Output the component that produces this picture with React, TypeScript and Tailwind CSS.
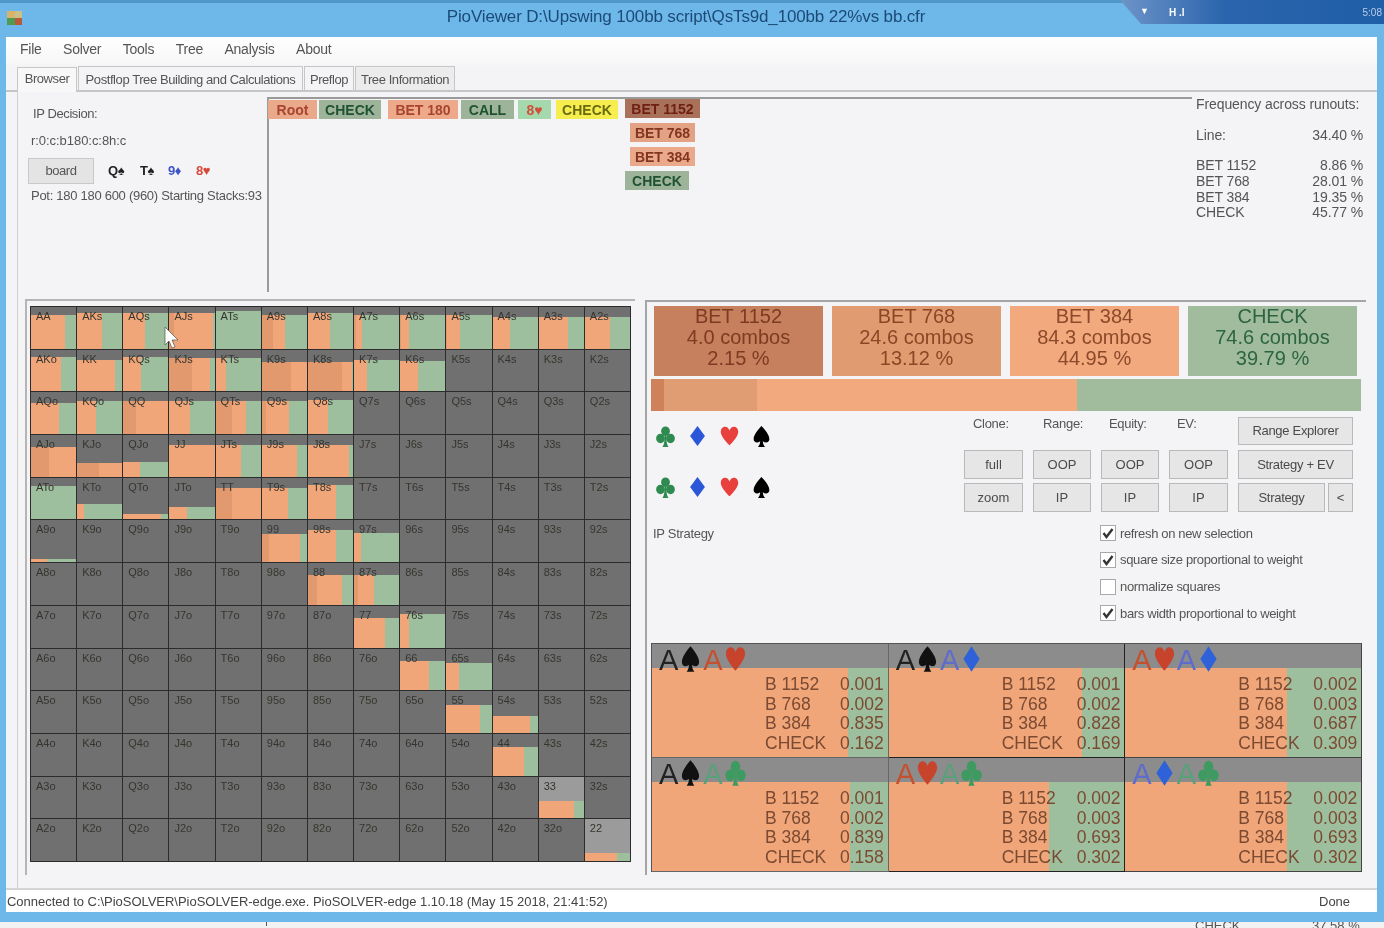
import React from "react";

const FONT = { fontFamily: '"Liberation Sans", Arial, sans-serif' };
const R = "AKQJT98765432".split("");
const ORANGE = "#f1a679";
const DARK = "#e2996e";
const GREEN = "#9dbf9e";

// hand: [coloured height, orange end, dark orange end]
const M: Record<string, [number, number, number?]> = {
  AA: [0.8, 0.75], AKs: [0.85, 0.55], AQs: [0.85, 0.5], AJs: [0.85, 0.96, 0.1], ATs: [0.9, 0], A9s: [0.82, 0.52, 0.25], A8s: [0.85, 0.48],
  A7s: [0.8, 0.17, 0.04], A6s: [0.8, 0.2, 0.03], A5s: [0.8, 0.3, 0.02], A4s: [0.75, 0.37], A3s: [0.75, 0.65], A2s: [0.75, 0.55],
  AKo: [0.82, 0.67], KK: [0.75, 0.85], KQs: [0.82, 0.4], KJs: [0.8, 0.9, 0.5], KTs: [0.8, 0.22], K9s: [0.7, 1, 0.65], K8s: [0.7, 0.98, 0.75],
  K7s: [0.75, 0.3], K6s: [0.72, 0.4],
  AQo: [0.75, 0.62], KQo: [0.8, 0.42], QQ: [0.8, 1, 0.3], QJs: [0.8, 0.45], QTs: [0.8, 0.67, 0.35], Q9s: [0.8, 0.6, 0.1], Q8s: [0.82, 0.45],
  AJo: [0.72, 1, 0.4], KJo: [0.34, 1, 0.5], QJo: [0.36, 0.38], JJ: [0.76, 1], JTs: [0.76, 0.55], J9s: [0.76, 0.78], J8s: [0.76, 0.92],
  ATo: [0.8, 0], KTo: [0.38, 0.15], QTo: [0.12, 0.85], JTo: [0.3, 0.4], TT: [0.75, 1, 0.35], T9s: [0.76, 0.58], T8s: [0.82, 0.62],
  A9o: [0.08, 0.35], "99": [0.68, 0.85, 0.15], "98s": [0.78, 0.62], "97s": [0.7, 0.15],
  "88": [0.72, 0.75, 0.2], "87s": [0.72, 0.45, 0.1],
  "77": [0.72, 0.68], "76s": [0.8, 0.2],
  "66": [0.7, 0.65], "65s": [0.65, 0.28],
  "55": [0.66, 0.75], "54s": [0.4, 0.82],
  "44": [0.68, 0.7],
  "33": [0.42, 0.78], "22": [0.2, 0.72],
};
const LIGHT = new Set(["33", "22"]);

function Cell({ r, c }: { r: number; c: number }) {
  const label = r === c ? R[r] + R[c] : c > r ? R[r] + R[c] + "s" : R[c] + R[r] + "o";
  const d = M[label];
  const top = LIGHT.has(label) ? "#9b9b9b" : "#707070";
  let bg = "";
  if (d) {
    const o = d[1] * 100;
    const k = (d[2] ?? 0) * 100;
    bg = `linear-gradient(to right, ${DARK} 0 ${k}%, ${ORANGE} ${k}% ${o}%, ${GREEN} ${o}% 100%)`;
  }
  return (
    <div className="relative border-r border-b border-[#2c2c2c] overflow-hidden" style={{ backgroundColor: top }}>
      {d && <div className="absolute inset-x-0 bottom-0" style={{ height: `${d[0] * 100}%`, background: bg }} />}
      <span className="absolute left-[5px] top-[2px] text-[11px] leading-[14px] text-[#35352f]">{label}</span>
    </div>
  );
}

function Chip({ t, bg, fg, w }: { t: string; bg: string; fg: string; w: string }) {
  return (
    <div className={`${w} h-[19px] flex items-center justify-center text-[14px] leading-none font-bold`} style={{ backgroundColor: bg, color: fg }}>
      {t}
    </div>
  );
}

function Btn({ t, className = "" }: { t: string; className?: string }) {
  return (
    <div className={`h-[29px] flex items-center justify-center bg-[#e6e6e6] border border-[#b9b9b9] text-[13px] text-[#4b4b4b] ${className}`}>{t}</div>
  );
}

function Stat({ t, sub, pct, bg, fg }: { t: string; sub: string; pct: string; bg: string; fg: string }) {
  return (
    <div className="w-[169px] h-[70px] flex flex-col items-center text-[20px] leading-[21px]" style={{ backgroundColor: bg, color: fg }}>
      <div>{t}</div>
      <div>{sub}</div>
      <div>{pct}</div>
    </div>
  );
}

function Check({ on, t }: { on: boolean; t: string }) {
  return (
    <div className="h-[26.7px] flex items-center gap-[4px]">
      <div className="w-[16px] h-[16px] border border-[#a8a8a8] bg-white flex items-center justify-center">
        {on && (
          <svg width="12" height="12" viewBox="0 0 12 12">
            <path d="M1.5 6 L4.5 10 L10.5 2" fill="none" stroke="#333" strokeWidth="2.4" />
          </svg>
        )}
      </div>
      <span className="text-[13px] text-[#555]">{t}</span>
    </div>
  );
}

const SUIT: Record<string, React.ReactNode> = {
  "♠": <path d="M12 1C12 1 3 9 3 14.5C3 18 7 19.5 10.5 17C10.3 19.5 9.5 21.5 8 23L16 23C14.5 21.5 13.7 19.5 13.5 17C17 19.5 21 18 21 14.5C21 9 12 1 12 1Z" />,
  "♥": <path d="M12 22C12 22 2 13 2 7.5C2 4 4.5 2 7 2C9.5 2 11 3.5 12 6C13 3.5 14.5 2 17 2C19.5 2 22 4 22 7.5C22 13 12 22 12 22Z" />,
  "♦": <path d="M12 1L20.5 12L12 23L3.5 12Z" />,
  "♣": (
    <>
      <circle cx="12" cy="6.5" r="5" />
      <circle cx="6.3" cy="14" r="5" />
      <circle cx="17.7" cy="14" r="5" />
      <path d="M11 10C11 17 10.5 20.5 8.5 23L15.5 23C13.5 20.5 13 17 13 10Z" />
    </>
  ),
};

function Suit({ s, color, w, h }: { s: string; color: string; w: number; h: number }) {
  return (
    <svg width={w} height={h} viewBox="0 0 24 24" preserveAspectRatio="none" fill={color} className="shrink-0">
      {SUIT[s]}
    </svg>
  );
}

const SC: Record<string, string> = { "♠": "#111111", "♥": "#c8432c", "♦": "#2f62d8", "♣": "#3f9a62" };
const AC: Record<string, string> = { "♠": "#222222", "♥": "#c5502f", "♦": "#5f6ccc", "♣": "#5aa07a" };

function Combo({ a, b, o, vals, dark }: { a: string; b: string; o: number; vals: string[]; dark: string }) {
  const names = ["B 1152", "B 768", "B 384", "CHECK"];
  return (
    <div className={`h-[114px] flex flex-col border-r border-b ${dark}`}>
      <div className="h-[24px] bg-[#8c8c8c] pl-[7px] flex items-center overflow-visible">
        {[a, b].map((s, i) => (
          <span key={i} className="flex items-center text-[29px] leading-none mt-[9px] relative z-10 mr-[1px]">
            <span style={{ color: AC[s] }}>A</span>
            <span className="ml-[1px] -mt-[3px]">
              <Suit s={s} color={SC[s]} w={23} h={28} />
            </span>
          </span>
        ))}
      </div>
      <div
        className="flex-1 pl-[113px] pt-[7px] text-[17.5px] leading-[19.7px] text-[#7b4a33]"
        style={{ background: `linear-gradient(to right, ${ORANGE} 0 ${o}%, ${GREEN} ${o}% 100%)` }}
      >
        {names.map((n, i) => (
          <div key={n} className="grid grid-cols-[75px_1fr]">
            <span>{n}</span>
            <span>{vals[i]}</span>
          </div>
        ))}
      </div>
    </div>
  );
}

export default function App() {
  return (
    <div style={FONT} className="relative w-[1384px] h-[928px] overflow-hidden bg-[#6db8e8] flex flex-col blur-[0.6px]">
      {/* title bar */}
      <div className="h-[37px] shrink-0 border-t-[3px] border-[#4f97c9] flex items-center justify-center relative">
        <div className="absolute left-[7px] top-[8px] w-[15px] h-[14px] grid grid-cols-2 grid-rows-2">
          <div className="bg-[#d7b36b]" />
          <div className="bg-[#c9c08a]" />
          <div className="bg-[#4f9b4f]" />
          <div className="bg-[#b8593a]" />
        </div>
        <span className="text-[17px] text-[#1c4a78] -ml-[12px] tracking-[-0.15px] -mt-[6px]">PioViewer D:\Upswing 100bb script\QsTs9d_100bb 22%vs bb.cfr</span>
        <div className="absolute right-0 -top-[3px] w-[264px] h-[24px] bg-[linear-gradient(to_right,#6d94c8,#2a64ac_40%,#1f5ea8)] [clip-path:polygon(0_0,100%_0,100%_100%,8%_100%)] flex items-start text-white text-[10px] pt-[5px]">
          <span className="ml-[20px] text-[9px]">▼</span>
          <span className="ml-[20px] font-bold">H .l</span>
          <span className="ml-auto mr-[2px] text-[#b9cde4]">5:08</span>
        </div>
      </div>

      {/* window */}
      <div className="ml-[6px] w-[1371px] h-[875px] shrink-0 bg-[#f4f4f6] flex flex-col">
        {/* menu */}
        <div className="h-[28px] shrink-0 bg-gradient-to-b from-white to-[#f6f6f6] pl-[14px] flex items-center gap-[21.5px] text-[14px] text-[#555] tracking-[-0.25px] pb-[3px]">
          <span>File</span>
          <span>Solver</span>
          <span>Tools</span>
          <span>Tree</span>
          <span>Analysis</span>
          <span>About</span>
        </div>
        {/* tabs */}
        <div className="h-[27px] shrink-0 pl-[11px] flex items-end border-b-2 border-[#c6c6c6] text-[13px] tracking-[-0.42px] text-[#555]">
          <div className="w-[60px] h-[25px] -mb-[2px] bg-[#f8f8f8] border border-b-0 border-[#c6c6c6] flex items-center justify-center pb-[2px] relative z-10">Browser</div>
          <div className="w-[225px] h-[24px] border border-b-0 border-[#c6c6c6] ml-[1px] flex items-center justify-center pt-[2px]">Postflop Tree Building and Calculations</div>
          <div className="w-[50px] h-[24px] border border-b-0 border-[#c6c6c6] ml-[1px] flex items-center justify-center pt-[2px]">Preflop</div>
          <div className="w-[100px] h-[24px] border border-b-0 border-[#c6c6c6] ml-[1px] bg-[#ececec] flex items-center justify-center pt-[2px]">Tree Information</div>
        </div>

        {/* content */}
        <div className="h-[796px] shrink-0 ml-[11px] border-l border-[#cfcfcf] flex flex-col">
          {/* upper */}
          <div className="h-[203px] shrink-0 flex">
            <div className="w-[249px] shrink-0 pl-[13px] text-[13px] text-[#555] tracking-[-0.4px]">
              <div className="pl-[2px] pt-[14px] leading-[16px]">IP Decision:</div>
              <div className="pt-[11px] leading-[16px] tracking-[-0.05px]">r:0:c:b180:c:8h:c</div>
              <div className="flex items-center mt-[9px]">
                <div className="-ml-[3px] w-[66px] h-[26px] bg-[#e4e4e4] border border-[#c8c8c8] flex items-center justify-center">board</div>
                <div className="flex text-[13px] font-bold ml-[14px]">
                  <span className="w-[32px] text-[#222]">Q♠</span>
                  <span className="w-[28px] text-[#222]">T♠</span>
                  <span className="w-[28px] text-[#3b55c8]">9♦</span>
                  <span className="text-[#d8483c]">8♥</span>
                </div>
              </div>
              <div className="pt-[3px] leading-[16px] whitespace-nowrap tracking-[-0.28px] mt-[1px]">Pot: 180 180 600 (960) Starting Stacks:93</div>
            </div>
            <div className="w-[925px] shrink-0 mt-[5px] h-[195px] border-l-2 border-t-2 border-[#9a9a9a] pt-[1px] flex items-start">
              <div className="flex gap-[3px] -ml-[1px]">
                <Chip t="Root" bg="#eba98c" fg="#a8452f" w="w-[49px]" />
                <Chip t="CHECK" bg="#9db49b" fg="#1f5232" w="w-[62px] -ml-[1px]" />
                <Chip t="BET 180" bg="#eda98a" fg="#a8452f" w="w-[70px] ml-[4px]" />
                <Chip t="CALL" bg="#9db49b" fg="#1f5232" w="w-[53px]" />
                <Chip t="8♥" bg="#a6d8ae" fg="#d0503c" w="w-[33px] ml-[1px]" />
                <Chip t="CHECK" bg="#f5ee4e" fg="#6c6a10" w="w-[62px] ml-[2px]" />
                <div className="flex flex-col items-center gap-[5px] ml-[4px] -mt-[1px]">
                  <Chip t="BET 1152" bg="#a9705a" fg="#6e1f12" w="w-[75px]" />
                  <Chip t="BET 768" bg="#e2a283" fg="#83361f" w="w-[65px]" />
                  <Chip t="BET 384" bg="#eba98c" fg="#83361f" w="w-[65px]" />
                  <Chip t="CHECK" bg="#9db49b" fg="#1f5232" w="w-[64px] -ml-[11px]" />
                </div>
              </div>
            </div>
            <div className="w-[178px] shrink-0 pl-[4px] pr-[7px] text-[14px] text-[#555] tracking-[-0.1px] pt-[4px]">
              <div className="leading-[16px]">Frequency across runouts:</div>
              <div className="flex justify-between mt-[15px] leading-[16px]"><span>Line:</span><span>34.40 %</span></div>
              <div className="flex justify-between mt-[14px] leading-[16px]"><span>BET 1152</span><span>8.86 %</span></div>
              <div className="flex justify-between leading-[16px]"><span>BET 768</span><span>28.01 %</span></div>
              <div className="flex justify-between leading-[16px]"><span>BET 384</span><span>19.35 %</span></div>
              <div className="flex justify-between leading-[15px]"><span>CHECK</span><span>45.77 %</span></div>
            </div>
          </div>

          {/* lower */}
          <div className="h-[593px] shrink-0 flex pl-[7px]">
            <div className="w-[610px] h-[576px] mt-[4px] border-l-2 border-t-2 border-[#b5b5b5] pl-[3px] pt-[5px] shrink-0">
              <div className="w-[601px] h-[556px] grid grid-cols-[repeat(13,1fr)] grid-rows-[repeat(13,1fr)] border-l border-t border-[#2c2c2c]">
                {R.map((_, r) => R.map((_, c) => <Cell key={`${r}-${c}`} r={r} c={c} />))}
              </div>
            </div>
            <div className="ml-[10px] w-[721px] h-[575px] mt-[5px] border-l-2 border-t-2 border-[#a5a5a5] pl-[4px] pt-[4px] shrink-0 flex flex-col">
              <div className="flex gap-[9px] pl-[3px]">
                <Stat t="BET 1152" sub="4.0 combos" pct="2.15 %" bg="#c6805d" fg="#7d3b22" />
                <Stat t="BET 768" sub="24.6 combos" pct="13.12 %" bg="#e09c70" fg="#8c4626" />
                <Stat t="BET 384" sub="84.3 combos" pct="44.95 %" bg="#f2a97d" fg="#8c4a2a" />
                <Stat t="CHECK" sub="74.6 combos" pct="39.79 %" bg="#a0bc9d" fg="#2d6442" />
              </div>
              <div className="mt-[3px] w-[710px] h-[32px] flex">
                <div className="w-[13px] bg-[#cf825a]" />
                <div className="w-[93px] bg-[#e09c72]" />
                <div className="w-[320px] bg-[#f2a97d]" />
                <div className="flex-1 bg-[#a0bc9d]" />
              </div>
              <div className="h-[232px] shrink-0 flex">
                <div className="w-[313px] shrink-0">
                  <div className="pl-[4px] pt-[14px] flex flex-col gap-[29px]">
                    {[0, 1].map((i) => (
                      <div key={i} className="flex items-center gap-[11px] h-[22px]">
                        <Suit s="♣" color="#2f8a4f" w={21} h={23} />
                        <Suit s="♦" color="#2b56d8" w={21} h={22} />
                        <Suit s="♥" color="#e8403c" w={21} h={22} />
                        <Suit s="♠" color="#000000" w={21} h={23} />
                      </div>
                    ))}
                  </div>
                  <div className="pl-[2px] mt-[28px] text-[13px] leading-[16px] text-[#555] tracking-[-0.3px]">IP Strategy</div>
                </div>
                <div className="flex flex-col">
                  <div className="grid grid-cols-[59px_58px_58px_59px_115px] gap-x-[10px] pt-[6px]">
                    <div className="pl-[9px] h-[33px] text-[13px] leading-[13px] text-[#555] tracking-[-0.3px]">Clone:</div>
                    <div className="pl-[10px] text-[13px] leading-[13px] text-[#555] tracking-[-0.3px]">Range:</div>
                    <div className="pl-[8px] text-[13px] leading-[13px] text-[#555] tracking-[-0.3px]">Equity:</div>
                    <div className="pl-[8px] text-[13px] leading-[13px] text-[#555] tracking-[-0.3px]">EV:</div>
                    <Btn t="Range Explorer" className="!h-[28px] tracking-[-0.3px]" />
                    <Btn t="full" />
                    <Btn t="OOP" />
                    <Btn t="OOP" />
                    <Btn t="OOP" />
                    <Btn t="Strategy + EV" className="tracking-[-0.3px]" />
                    <div className="col-span-5 h-[4px]" />
                    <Btn t="zoom" />
                    <Btn t="IP" />
                    <Btn t="IP" />
                    <Btn t="IP" />
                    <div className="flex gap-[3px]">
                      <Btn t="Strategy" className="w-[87px] tracking-[-0.3px]" />
                      <Btn t="<" className="w-[25px]" />
                    </div>
                  </div>
                  <div className="pl-[136px] pt-[8px] tracking-[-0.35px]">
                    <Check on t="refresh on new selection" />
                    <Check on t="square size proportional to weight" />
                    <Check on={false} t="normalize squares" />
                    <Check on t="bars width proportional to weight" />
                  </div>
                </div>
              </div>
              <div className="w-[711px] h-[229px] grid grid-cols-3 grid-rows-2 border-t border-l border-[#555]">
                <Combo a="♠" b="♥" o={83} vals={["0.001", "0.002", "0.835", "0.162"]} dark="border-[#666]" />
                <Combo a="♠" b="♦" o={82} vals={["0.001", "0.002", "0.828", "0.169"]} dark="border-[#222]" />
                <Combo a="♥" b="♦" o={68.5} vals={["0.002", "0.003", "0.687", "0.309"]} dark="border-[#444]" />
                <Combo a="♠" b="♣" o={84} vals={["0.001", "0.002", "0.839", "0.158"]} dark="border-[#666]" />
                <Combo a="♥" b="♣" o={68} vals={["0.002", "0.003", "0.693", "0.302"]} dark="border-[#222]" />
                <Combo a="♦" b="♣" o={68.5} vals={["0.002", "0.003", "0.693", "0.302"]} dark="border-[#444]" />
              </div>
            </div>
          </div>
        </div>

        {/* status bar */}
        <div className="h-[24px] shrink-0 bg-white border-t-2 border-[#d4d4d4] pl-[1px] pr-[27px] pt-[2px] flex items-center justify-between text-[13px] text-[#444] tracking-[-0.03px]">
          <span>Connected to C:\PioSOLVER\PioSOLVER-edge.exe. PioSOLVER-edge 1.10.18 (May 15 2018, 21:41:52)</span>
          <span>Done</span>
        </div>
      </div>

      {/* window bottom */}
      <div className="h-[10px] shrink-0" />
      <div className="h-[6px] shrink-0 bg-[#f2f2f2] relative overflow-hidden">
        <span className="absolute left-[1195px] -top-[3px] text-[13px] leading-[14px] text-[#555]">CHECK</span>
        <span className="absolute left-[1312px] -top-[3px] text-[13px] leading-[14px] text-[#555]">37.58 %</span>
        <div className="absolute left-[266px] top-0 w-px h-[4px] bg-[#555]" />
      </div>

      {/* mouse cursor */}
      <svg className="absolute left-[164px] top-[326px]" width="16" height="24" viewBox="0 0 16 24">
        <path d="M1 1 L1 19 L5 15 L8 22 L11 21 L8 14 L14 14 Z" fill="#fff" stroke="#555" strokeWidth="0.7" />
      </svg>
    </div>
  );
}
